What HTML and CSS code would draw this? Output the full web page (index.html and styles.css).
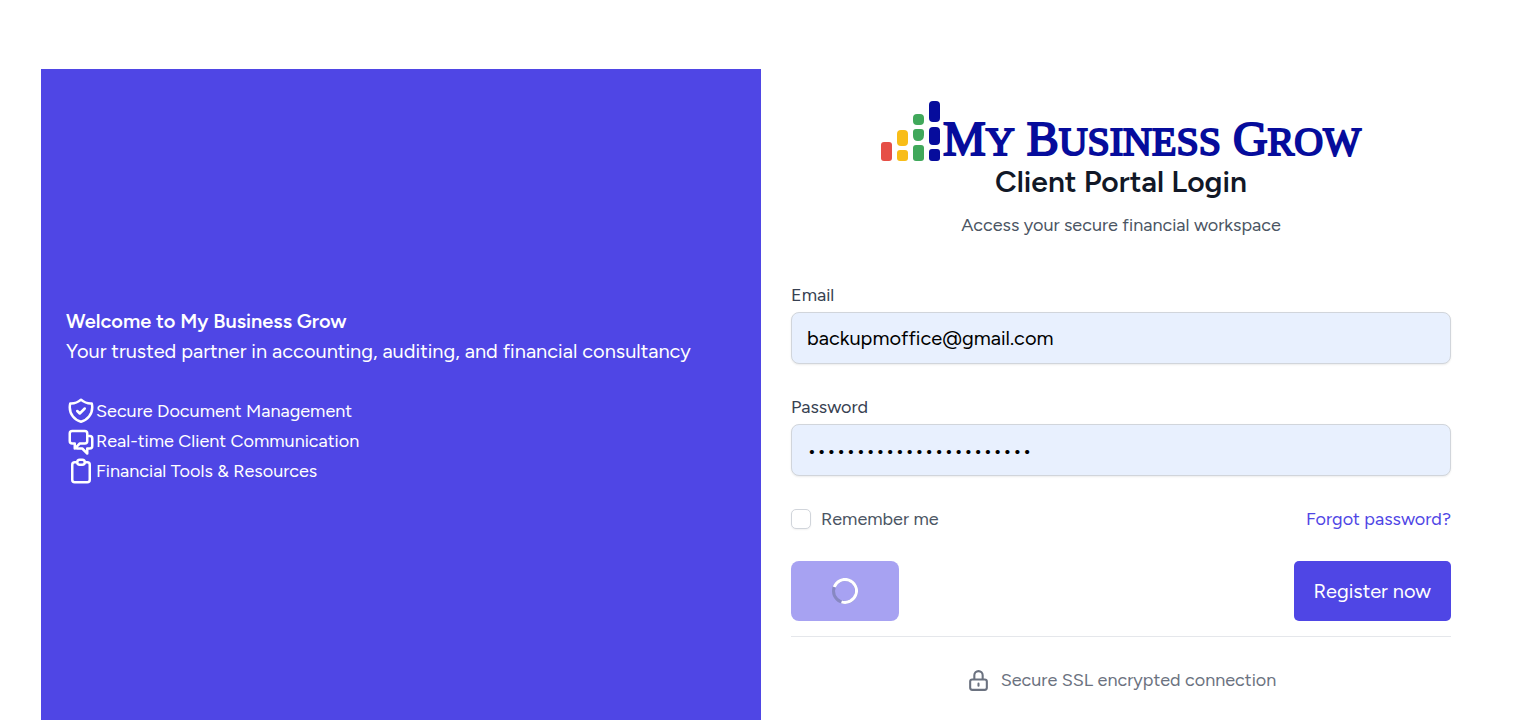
FILE: index.html
```html
<!DOCTYPE html>
<html lang="en">
<head>
<meta charset="utf-8">
<meta name="viewport" content="width=device-width, initial-scale=1">
<title>Client Portal Login</title>
<link rel="stylesheet" href="styles.css">
</head>
<body>
<main class="login">
  <section class="intro">
    <h2 class="intro-title">Welcome to My Business Grow</h2>
    <p class="intro-lead">Your trusted partner in accounting, auditing, and financial consultancy</p>
    <ul class="features">
      <li><svg class="icon" viewBox="0 0 24 24" aria-hidden="true"><path d="M9 12l2 2 4-4m5.618-4.016A11.955 11.955 0 0112 2.944a11.955 11.955 0 01-8.618 3.04A12.02 12.02 0 003 9c0 5.591 3.824 10.29 9 11.622 5.176-1.332 9-6.03 9-11.622 0-1.042-.133-2.052-.382-3.016z"/></svg><span>Secure Document Management</span></li>
      <li><svg class="icon" viewBox="0 0 24 24" aria-hidden="true"><path d="M17 8h2a2 2 0 012 2v6a2 2 0 01-2 2h-2v4l-4-4H9a1.994 1.994 0 01-1.414-.586m0 0L11 14h4a2 2 0 002-2V6a2 2 0 00-2-2H5a2 2 0 00-2 2v6a2 2 0 002 2h2v4l.586-.586z"/></svg><span>Real-time Client Communication</span></li>
      <li><svg class="icon" viewBox="0 0 24 24" aria-hidden="true"><path d="M9 5H7a2 2 0 00-2 2v12a2 2 0 002 2h10a2 2 0 002-2V7a2 2 0 00-2-2h-2M9 5a2 2 0 002 2h2a2 2 0 002-2M9 5a2 2 0 012-2h2a2 2 0 012 2"/></svg><span>Financial Tools &amp; Resources</span></li>
    </ul>
  </section>

  <section class="panel">
    <header class="panel-header">
      <div class="logo">
        <svg class="logo-mark" viewBox="0 0 60 60" aria-hidden="true">
          <rect x="0" y="41" width="11" height="19" rx="3" fill="#e64f46"/>
          <rect x="16" y="29" width="11" height="16" rx="4" fill="#f8bd18"/>
          <rect x="16" y="49" width="11" height="11" rx="3" fill="#f8bd18"/>
          <rect x="32" y="13" width="11" height="11" rx="4" fill="#40a85b"/>
          <path d="M35 28h5q3 0 3 3v3q0 6-6 6-5 0-5-5v-4q0-3 3-3z" fill="#40a85b"/>
          <rect x="32" y="44" width="11" height="16" rx="3" fill="#40a85b"/>
          <rect x="48" y="0" width="11" height="21" rx="4" fill="#060c9c"/>
          <rect x="48" y="26" width="11" height="18" rx="4" fill="#060c9c"/>
          <rect x="48" y="48" width="11" height="12" rx="3" fill="#060c9c"/>
        </svg>
        <span class="logo-name">M<small>Y</small> B<small>USINESS</small> G<small>ROW</small></span>
      </div>
      <h1 class="title">Client Portal Login</h1>
      <p class="subtitle">Access your secure financial workspace</p>
    </header>

    <form class="form">
      <div class="field">
        <label for="email">Email</label>
        <input class="text-input" id="email" type="email" value="backupmoffice@gmail.com">
      </div>
      <div class="field">
        <label for="password">Password</label>
        <input class="text-input" id="password" type="password" value="abcdefghijklmnopqrstuvw">
      </div>
      <div class="row options">
        <label class="remember" for="remember"><input class="check" id="remember" type="checkbox">Remember me</label>
        <a class="forgot" href="#">Forgot password?</a>
      </div>
      <div class="row actions">
        <button class="submit" type="submit" aria-label="Logging in" disabled>
          <svg class="spinner" viewBox="0 0 26 26" aria-hidden="true"><circle cx="13" cy="13" r="11.5" stroke="#8788c2"/><path d="M2.2 9A11.5 11.5 0 1 1 9.5 23.9" stroke="#fff"/></svg>
        </button>
        <button class="register" type="button">Register now</button>
      </div>
    </form>

    <footer class="secure">
      <svg class="lock" viewBox="0 0 24 24" aria-hidden="true"><path d="M12 15v2m-6 4h12a2 2 0 002-2v-6a2 2 0 00-2-2H6a2 2 0 00-2 2v6a2 2 0 002 2zm10-10V7a4 4 0 00-8 0v4h8z"/></svg>
      <span>Secure SSL encrypted connection</span>
    </footer>
  </section>
</main>
</body>
</html>
```
FILE: styles.css
```css
* { box-sizing: border-box; }

body {
  margin: 0;
  height: 100vh;
  overflow: hidden;
  padding: 69px 48px 0 40px;
  background: #fff;
  font-family: Figtree, Lato, sans-serif;
  font-size: 18px;
  line-height: 30px;
  color: #4b5563;
}

h1, h2, p, ul { margin: 0; padding: 0; }

.login {
  display: grid;
  grid-template-columns: 1fr 1fr;
  max-width: 1440px;
  margin: 0 auto;
}

.intro {
  display: flex;
  flex-direction: column;
  justify-content: center;
  padding: 25px;
  background: #4f46e5;
  color: #fff;
}

.intro-title { font-size: 20px; font-weight: 600; }
.intro-lead { font-size: 20px; }

.features { margin-top: 30px; list-style: none; }
.features li { display: flex; align-items: center; }

.icon, .lock {
  flex: none;
  fill: none;
  stroke: currentColor;
  stroke-width: 2;
  stroke-linecap: round;
  stroke-linejoin: round;
}
.icon { width: 30px; height: 30px; }

.panel { padding: 30px 30px 28px; }
.panel-header { text-align: center; }

.logo {
  display: flex;
  align-items: flex-end;
  justify-content: center;
  height: 63px;
  padding-bottom: 1px;
}
.logo-mark { flex: none; width: 60px; height: 60px; }
.logo-name {
  margin-left: 2px;
  font-family: "Liberation Serif", serif;
  font-size: 48px;
  line-height: 38px;
  white-space: nowrap;
  color: #060c9c;
  -webkit-text-stroke: 2px #060c9c;
}
.logo-name small { font-size: 40px; }

.title {
  font-size: 30px;
  font-weight: 600;
  line-height: 40px;
  color: #111827;
}
.subtitle { margin-top: 8px; }

.form { margin-top: 40px; }
.field { margin-bottom: 28px; }
.field label {
  display: block;
  padding-bottom: 2px;
  color: #374151;
}

.text-input {
  display: block;
  width: 100%;
  height: 52px;
  padding: 0 15px;
  border: 1px solid #d1d5db;
  border-radius: 8px;
  background: #e8f0fe;
  box-shadow: 0 1px 2px rgba(0, 0, 0, 0.08);
  font: inherit;
  font-size: 20px;
  color: #000;
}

.row {
  display: flex;
  align-items: center;
  justify-content: space-between;
}
.remember { display: flex; align-items: center; gap: 10px; }
.check {
  appearance: none;
  width: 20px;
  height: 20px;
  margin: 0;
  border: 1px solid #d1d5db;
  border-radius: 5px;
  background: #fff;
  box-shadow: 0 1px 2px rgba(0, 0, 0, 0.06);
}
.forgot { color: #4f46e5; text-decoration: none; }

.actions {
  margin-top: 27px;
  padding-bottom: 15px;
  border-bottom: 1px solid #e5e7eb;
}
.submit, .register {
  height: 60px;
  border: 0;
  background: #4f46e5;
  color: #fff;
  font: inherit;
  font-size: 20px;
}
.submit {
  display: flex;
  align-items: center;
  justify-content: center;
  width: 108px;
  border-radius: 8px;
  background: #a7a2f2;
}
.register { padding: 0 20px; border-radius: 5px; }
.spinner { width: 26px; height: 26px; fill: none; stroke-width: 3; }

.secure {
  display: flex;
  align-items: center;
  justify-content: center;
  gap: 10px;
  margin-top: 28px;
  color: #6b7280;
}
.lock { width: 25px; height: 25px; }
```
